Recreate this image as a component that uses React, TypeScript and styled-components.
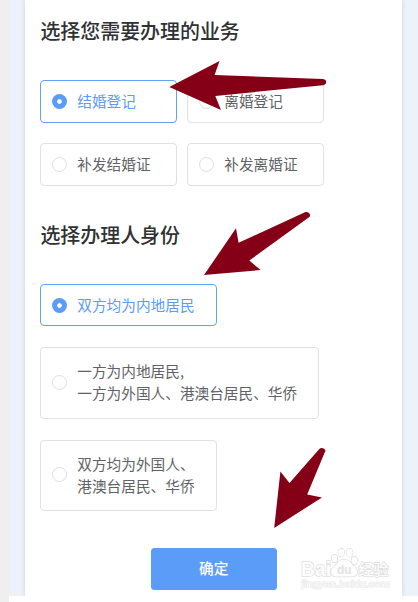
import React, { useState } from "react";
import styled, { createGlobalStyle, css } from "styled-components";

const GlobalStyle = createGlobalStyle`
  * { box-sizing: border-box; }
  html, body { margin: 0; padding: 0; background: #fff; overflow: hidden; }
  body { font-family: "Noto Sans CJK SC", sans-serif; }
`;

const Page = styled.div`
  position: relative;
  display: flex;
  width: 418px;
  height: 602px;
  overflow: hidden;
  background: #fff;
`;

const Gutter = styled.div`
  flex: none;
  width: 9px;
  background: #efefef;
`;

const Backdrop = styled.div`
  flex: 1;
  display: flex;
  height: 596px;
  padding: 0 16px;
  background: #edf1fa;
  overflow: hidden;
`;

const Card = styled.main`
  flex: 1;
  display: flex;
  flex-direction: column;
  align-items: flex-start;
  padding: 16px 15px 0 15.4px;
  background: #fff;
  box-shadow: 0 0 4px rgba(160, 172, 190, 0.45);
`;

const Heading = styled.h2<{ $spaced?: boolean }>`
  margin: ${(p) => (p.$spaced ? "34px 0 0" : "0")};
  height: 30px;
  font-size: 19.95px;
  line-height: 30px;
  font-weight: 500;
  color: #303133;
  white-space: nowrap;
`;

const ServiceGrid = styled.div`
  display: grid;
  grid-template-columns: 136.6px 136.6px;
  gap: 20px 10.4px;
  margin-top: 34px;
`;

const IdentityList = styled.div`
  display: flex;
  flex-direction: column;
  align-items: flex-start;
  gap: 21px;
  margin-top: 34px;
`;

const Option = styled.button<{ $active: boolean; $width?: number; $height: number }>`
  display: flex;
  align-items: center;
  width: ${(p) => (p.$width ? `${p.$width}px` : "auto")};
  height: ${(p) => p.$height}px;
  padding: 0 0 ${(p) => (p.$height > 60 ? 2 : p.$height % 2)}px 10.6px;
  gap: 10.3px;
  font: 400 14.67px/22px "Noto Sans CJK SC", sans-serif;
  text-align: left;
  white-space: pre;
  background: #fff;
  border: 1px solid ${(p) => (p.$active ? "#62a1fa" : "#dfe1e9")};
  border-radius: 4px;
  color: ${(p) => (p.$active ? "#5b9cf8" : "#606266")};
`;

const Radio = styled.span<{ $active: boolean }>`
  flex: none;
  width: 15px;
  height: 15px;
  border-radius: 50%;
  background: #fff;
  border: 1px solid #dcdfe6;
  ${(p) =>
    p.$active &&
    css`
      border: 0;
      background: radial-gradient(circle, #fff 1.9px, #5b9cf8 2.7px);
    `}
`;

const Confirm = styled.button`
  align-self: center;
  width: 126px;
  height: 42px;
  margin-top: 37px;
  padding: 0 0 2px;
  border: 0;
  border-radius: 3.5px;
  background: #5b9cf8;
  color: #fff;
  font: 500 14.67px/40px "Noto Sans CJK SC", sans-serif;
`;

const Overlay = styled.svg`
  position: absolute;
  inset: 0;
  pointer-events: none;
`;

const services = ["结婚登记", "离婚登记", "补发结婚证", "补发离婚证"];
const identities = [
  { label: "双方均为内地居民", width: 176.6, height: 42 },
  { label: "一方为内地居民,\n一方为外国人、港澳台居民、华侨", width: 279, height: 72 },
  { label: "双方均为外国人、\n港澳台居民、华侨", width: 176.6, height: 71 },
];

function Arrows() {
  return (
    <g fill="#850016">
      <path d="M169.3 87 219.5 61 214.6 75 323 79Q326.2 79.5 326.2 82T323 85.2L215.3 96 221 110Z" />
      <path d="M204 275 236 228.3 238.6 242.8 305.5 212Q308.3 211.4 309.6 213.8T309 217.2L249.3 260.5 260.6 270Z" />
      <path d="M274.2 528 280.4 471.5 289.5 483 319.3 449Q321.7 447 324 448.8T324.8 452.2L307.2 494.4 322 497.4Z" />
    </g>
  );
}

function Watermark() {
  return (
    <g
      fill="#fdfdfd"
      stroke="#dedede"
      strokeWidth="1.5"
      paintOrder="stroke"
      fontFamily="Liberation Sans, sans-serif"
    >
      <text x="301" y="576" fontSize="20.5" fontWeight="700" textLength="30" lengthAdjust="spacingAndGlyphs">Bai</text>
      <g strokeWidth="1.4">
        <ellipse cx="334.5" cy="558.5" rx="2.8" ry="3.8" />
        <ellipse cx="341.3" cy="552.5" rx="3.1" ry="4.1" />
        <ellipse cx="349.5" cy="552.8" rx="3.1" ry="4.1" />
        <ellipse cx="354.3" cy="560.5" rx="2.8" ry="3.8" />
        <path d="M344 559.5C338.5 559.5 338 564 333.5 567C329 571 331 576.5 336 576.5H352C358 576.5 359 571 355 567C351 564 350 559.5 344 559.5Z" />
      </g>
      <text x="337" y="574" fontSize="13.5" fontWeight="700" fill="#e2e2e2" stroke="none" textLength="14.5" lengthAdjust="spacingAndGlyphs">du</text>
      <text x="358.5" y="574.5" fontSize="15" fontWeight="500" strokeWidth="1.4" fontFamily="Noto Sans CJK SC, sans-serif">经验</text>
      <text x="301.5" y="587" fontSize="9.5" fill="#fbfbfb" stroke="#e9e9e9" strokeWidth="1.2" textLength="88" lengthAdjust="spacingAndGlyphs">jingyan.baidu.com</text>
    </g>
  );
}

export default function App() {
  const [service, setService] = useState(0);
  const [identity, setIdentity] = useState(0);
  return (
    <Page>
      <GlobalStyle />
      <Gutter />
      <Backdrop>
        <Card>
          <Heading>选择您需要办理的业务</Heading>
          <ServiceGrid>
            {services.map((label, i) => (
              <Option key={label} $active={i === service} $height={43} onClick={() => setService(i)}>
                <Radio $active={i === service} />
                {label}
              </Option>
            ))}
          </ServiceGrid>
          <Heading $spaced>选择办理人身份</Heading>
          <IdentityList>
            {identities.map((item, i) => (
              <Option
                key={item.label}
                $active={i === identity}
                $width={item.width}
                $height={item.height}
                onClick={() => setIdentity(i)}
              >
                <Radio $active={i === identity} />
                {item.label}
              </Option>
            ))}
          </IdentityList>
          <Confirm>确定</Confirm>
        </Card>
      </Backdrop>
      <Overlay width="418" height="602" viewBox="0 0 418 602">
        <Watermark />
        <Arrows />
      </Overlay>
    </Page>
  );
}
